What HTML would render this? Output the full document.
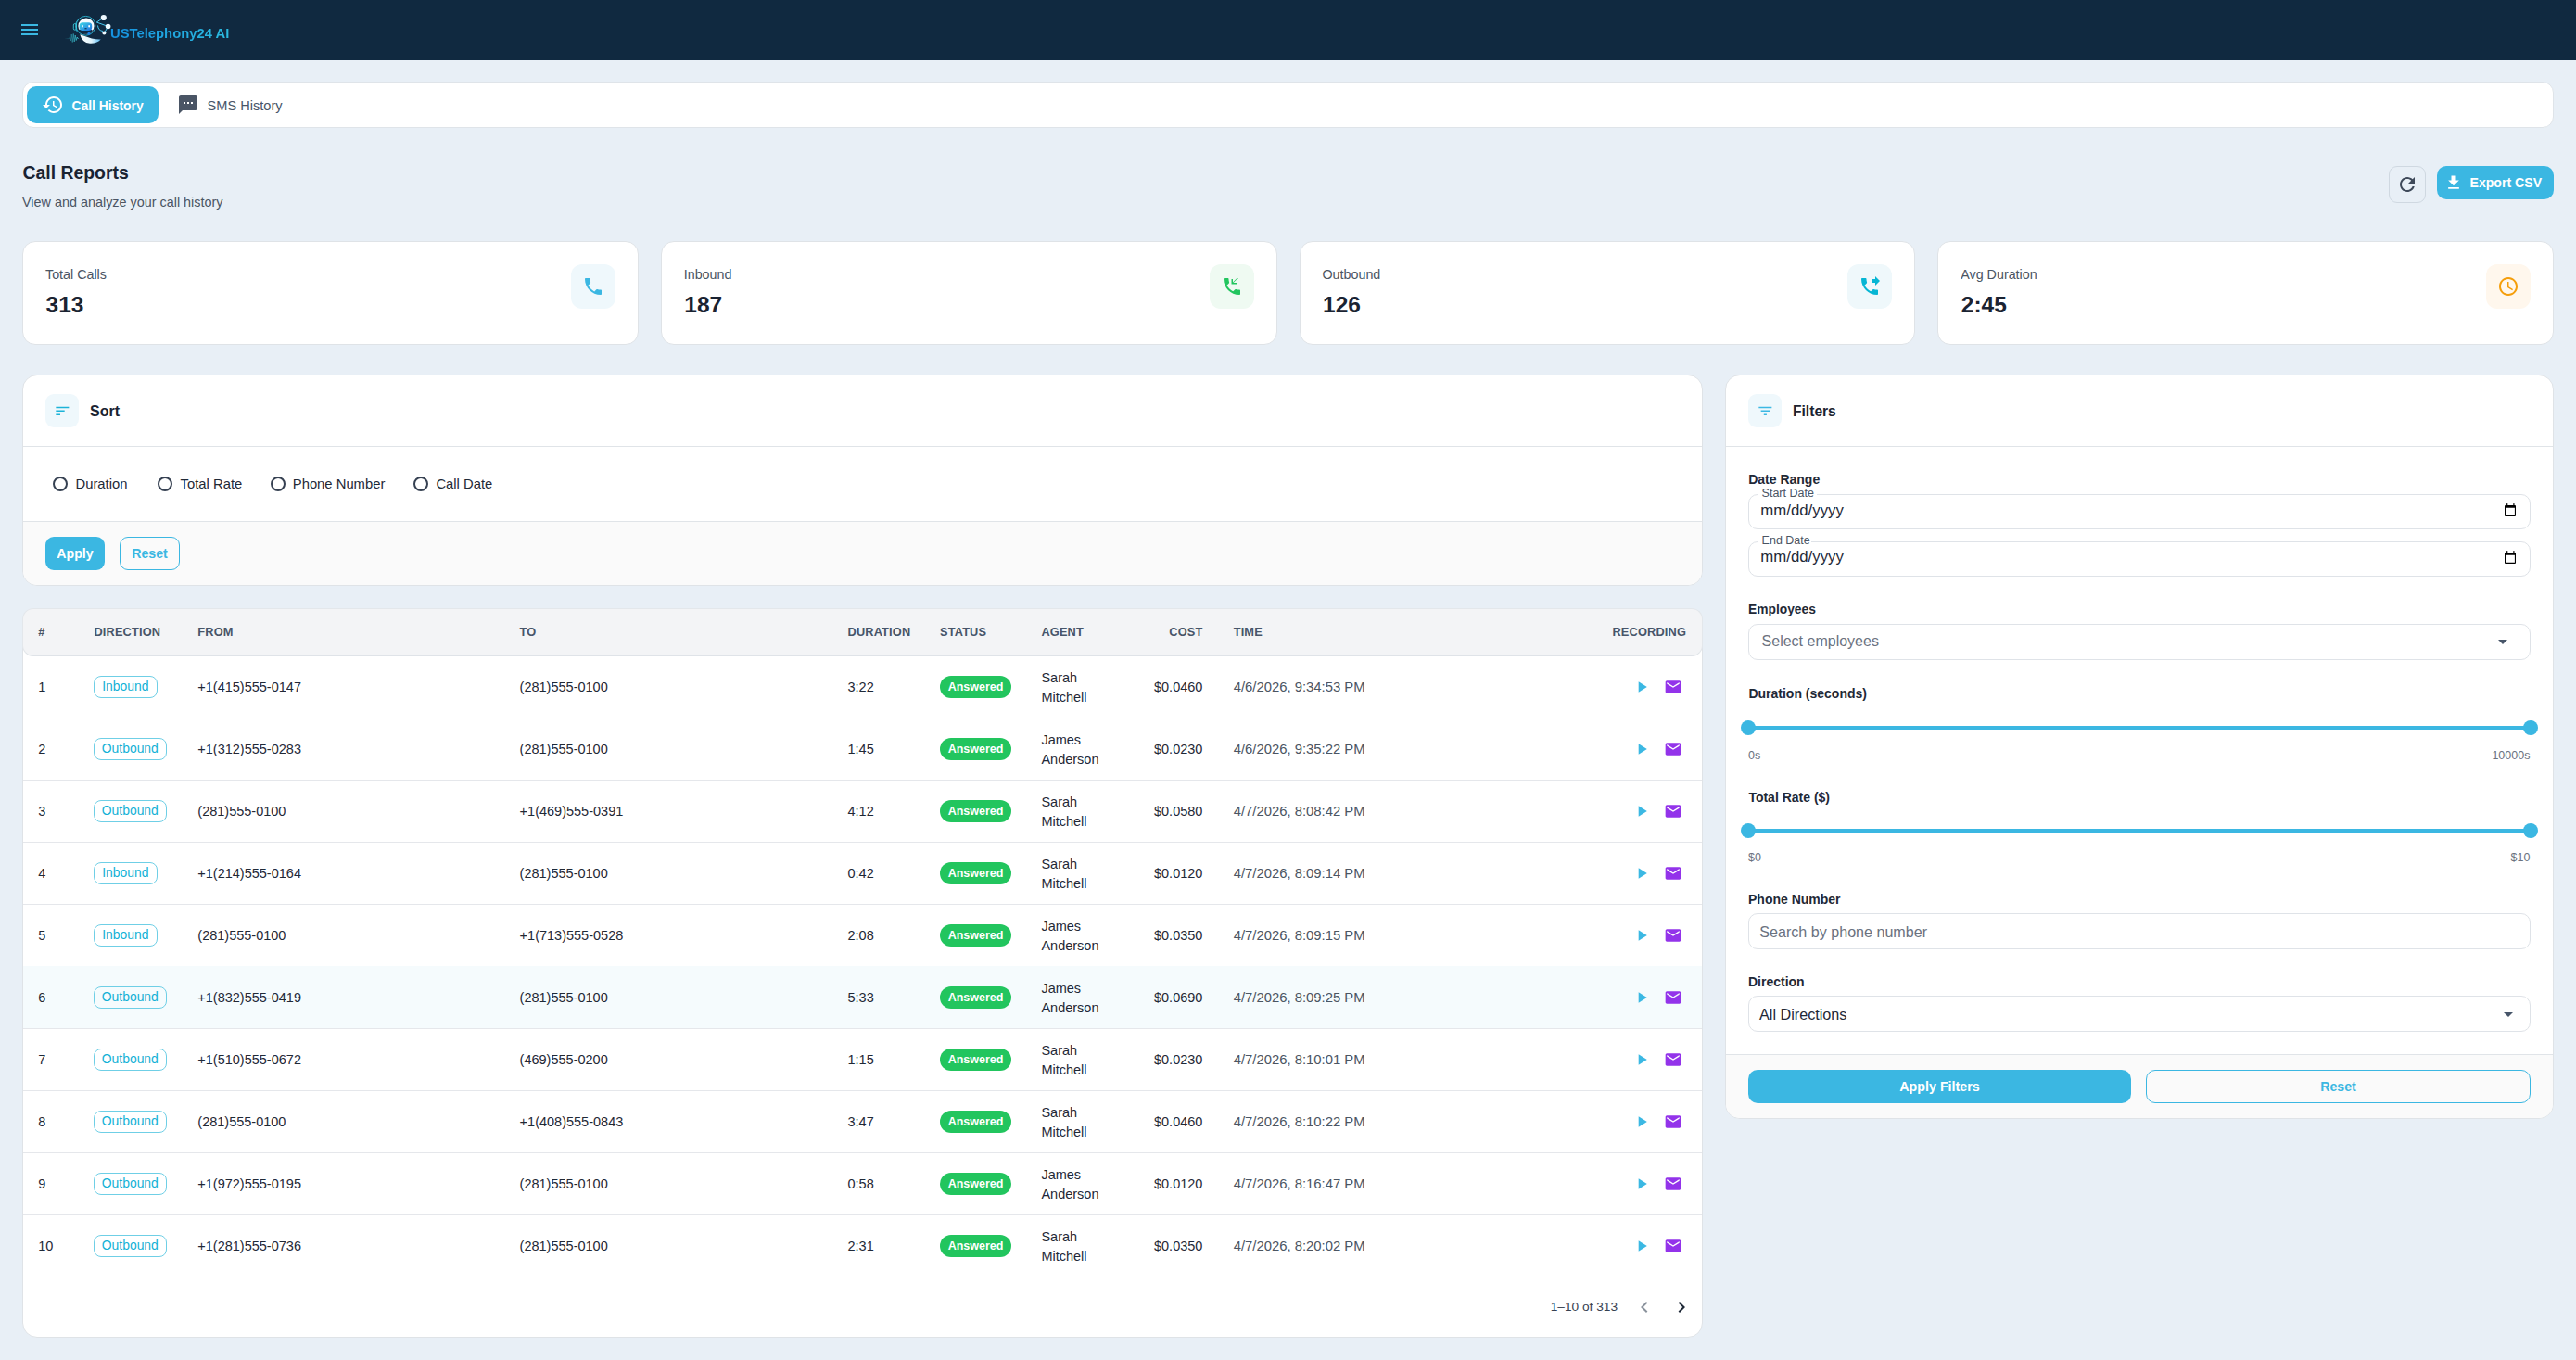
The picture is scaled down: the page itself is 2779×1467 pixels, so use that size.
<!DOCTYPE html>
<html><head><meta charset="utf-8"><title>Call Reports</title>
<style>
html,body{margin:0;padding:0}
body{width:2779px;height:1467px;position:relative;overflow:hidden;background:#e8eff6;font-family:"Liberation Sans",sans-serif}
.t{position:absolute;white-space:nowrap}
.b{position:absolute}
.i{position:absolute;display:block}
</style></head><body>
<div class="b" style="left:0px;top:0px;width:2779px;height:65px;background:#102940"></div>
<svg class="i" style="left:20px;top:20px;" width="24" height="24" viewBox="0 0 24 24"><path d="M3 18h18v-2H3v2zm0-5h18v-2H3v2zm0-7v2h18V6H3z" fill="#3bb8e3"/></svg>
<svg class="i" style="left:66px;top:12px" width="56" height="38" viewBox="0 0 56 38">
<defs>
<linearGradient id="vis" x1="0" y1="0" x2="1" y2="1"><stop offset="0" stop-color="#3fd9e6"/><stop offset="1" stop-color="#1e6fe0"/></linearGradient>
<linearGradient id="bod" x1="0" y1="0" x2="1" y2="0"><stop offset="0" stop-color="#ffffff"/><stop offset="0.55" stop-color="#dff3fb"/><stop offset="1" stop-color="#56b9f2"/></linearGradient>
<linearGradient id="wav" x1="0" y1="0" x2="1" y2="0"><stop offset="0" stop-color="#2aa5b8" stop-opacity="0"/><stop offset="1" stop-color="#3cc0d0"/></linearGradient>
</defs>
<path d="M3.5 29.6 H8.5 L9.4 27.5 L10.3 32 L11.2 25 L12.2 33.5 L13.2 24.5 L14.2 33 L15.2 26 L16.2 31.5 L17.2 28 L18.5 30" stroke="url(#wav)" stroke-width="0.9" fill="none"/>
<circle cx="26.5" cy="15.8" r="10.4" fill="none" stroke="#2cb9d6" stroke-width="0.9"/>
<path d="M18 9.5 A10.4 10.4 0 0 0 17.2 22" stroke="#2cb9d6" stroke-width="0.8" fill="none"/>
<rect x="13.3" y="13.6" width="3.2" height="6.6" rx="1.4" fill="none" stroke="#3cc7da" stroke-width="0.9"/>
<circle cx="27" cy="16" r="8.6" fill="#f4fbff"/>
<path d="M18.6 18 Q19 24.5 27 24.7 Q31 24.5 33.5 21.5 L33.5 20 L19 20z" fill="#102a44"/>
<rect x="19.6" y="12.3" width="13.6" height="8.8" rx="3.6" fill="url(#vis)"/>
<rect x="22.1" y="15" width="1.7" height="2.6" rx="0.8" fill="#fff"/>
<rect x="29.3" y="15" width="1.7" height="2.6" rx="0.8" fill="#fff"/>
<rect x="25.3" y="18.3" width="2.4" height="1" rx="0.5" fill="#0f2a44"/>
<circle cx="29.9" cy="24.3" r="1.5" fill="#1b7fe0"/>
<path d="M20.3 25.2 Q27 27.5 33 29.4 Q39 30.8 42.8 30.5 Q38 35.2 31 34.8 Q22.5 34 20.3 25.2z" fill="url(#bod)"/>
<path d="M38.3 12 L45.8 7 M38.3 12 L50.6 16.5 L46.4 23.5" stroke="#49c9f2" stroke-width="1" fill="none"/>
<path d="M39.5 15.5 Q40 21 45 21.5" stroke="#49c9f2" stroke-width="1" fill="none"/>
<circle cx="45.8" cy="7" r="3.1" fill="#eef9ff"/>
<circle cx="50.6" cy="16.5" r="2.8" fill="#eef9ff"/>
<circle cx="46.4" cy="23.5" r="2" fill="#eef9ff"/>
</svg>
<div class="t" style="left:119px;top:29.4px;font-size:14.8px;line-height:15px;font-weight:700;background:linear-gradient(90deg,#1591e0,#2bbbe0);-webkit-background-clip:text;background-clip:text;color:transparent">USTelephony24 AI</div>
<div class="b" style="left:24px;top:88px;width:2731px;height:50px;background:#fff;border:1px solid #dfe4e9;border-radius:12px;box-sizing:border-box"></div>
<div class="b" style="left:29px;top:93px;width:142px;height:40px;background:#3bb7e2;border-radius:10px"></div>
<svg class="i" style="left:45px;top:101px;" width="24" height="24" viewBox="0 0 24 24"><path d="M13 3c-4.97 0-9 4.03-9 9H1l3.89 3.89.07.14L9 12H6c0-3.87 3.13-7 7-7s7 3.13 7 7-3.13 7-7 7c-1.93 0-3.68-.79-4.94-2.06l-1.42 1.42C8.27 19.99 10.51 21 13 21c4.97 0 9-4.03 9-9s-4.03-9-9-9zm-1 5v5l4.28 2.54.72-1.21-3.5-2.08V8H12z" fill="#fff"/></svg>
<div class="t" style="left:77.50px;top:107.73px;font-size:13.9px;line-height:13.9px;font-weight:700;color:#fff;">Call History</div>
<svg class="i" style="left:191px;top:101px;" width="24" height="24" viewBox="0 0 24 24"><path d="M20 2H4c-1.1 0-1.99.9-1.99 2L2 22l4-4h14c1.1 0 2-.9 2-2V4c0-1.1-.9-2-2-2zM9 11H7V9h2v2zm4 0h-2V9h2v2zm4 0h-2V9h2v2z" fill="#4a5565"/></svg>
<div class="t" style="left:223.50px;top:106.84px;font-size:14.6px;line-height:14.6px;font-weight:400;color:#475569;">SMS History</div>
<div class="t" style="left:24.50px;top:176.58px;font-size:19.4px;line-height:19.4px;font-weight:700;color:#1a2332;">Call Reports</div>
<div class="t" style="left:24.00px;top:211.21px;font-size:14.4px;line-height:14.4px;font-weight:400;color:#4b5563;">View and analyze your call history</div>
<div class="b" style="left:2577px;top:179px;width:40px;height:40px;border:1px solid #cfd8e1;border-radius:9px;box-sizing:border-box"></div>
<svg class="i" style="left:2585px;top:187px;" width="24" height="24" viewBox="0 0 24 24"><path d="M17.65 6.35C16.2 4.9 14.21 4 12 4c-4.42 0-7.99 3.58-7.99 8s3.57 8 7.99 8c3.73 0 6.84-2.55 7.73-6h-2.08c-.82 2.33-3.04 4-5.65 4-3.31 0-6-2.69-6-6s2.69-6 6-6c1.66 0 3.14.69 4.22 1.78L13 11h7V4l-2.35 2.35z" fill="#3f4a5a"/></svg>
<div class="b" style="left:2629px;top:179px;width:126px;height:36px;background:#3bb7e2;border-radius:10px"></div>
<svg class="i" style="left:2637px;top:187px;" width="20" height="20" viewBox="0 0 24 24"><path d="M5 20h14v-2H5v2zM19 9h-4V3H9v6H5l7 7 7-7z" fill="#fff"/></svg>
<div class="t" style="left:2664.50px;top:190.06px;font-size:14.1px;line-height:14.1px;font-weight:700;color:#fff;">Export CSV</div>
<div class="b" style="left:24.0px;top:260px;width:664.75px;height:112px;background:#fff;border:1px solid #dfe3e7;border-radius:14px;box-sizing:border-box"></div>
<div class="t" style="left:49.00px;top:288.90px;font-size:14.3px;line-height:14.3px;font-weight:400;color:#4b5563;">Total Calls</div>
<div class="t" style="left:49.50px;top:316.76px;font-size:24.5px;line-height:24.5px;font-weight:700;color:#1a2332;">313</div>
<div class="b" style="left:615.75px;top:285px;width:48.0px;height:48px;background:#eff8fc;border-radius:12px"></div>
<svg class="i" style="left:627.75px;top:297px;" width="24" height="24" viewBox="0 0 24 24"><path d="M6.62 10.79c1.44 2.83 3.76 5.14 6.59 6.59l2.2-2.2c.27-.27.67-.36 1.02-.24 1.12.37 2.33.57 3.57.57.55 0 1 .45 1 1V20c0 .55-.45 1-1 1-9.39 0-17-7.61-17-17 0-.55.45-1 1-1h3.5c.55 0 1 .45 1 1 0 1.25.2 2.45.57 3.57.11.35.03.74-.25 1.02l-2.2 2.2z" fill="#3bb7e2"/></svg>
<div class="b" style="left:712.75px;top:260px;width:664.75px;height:112px;background:#fff;border:1px solid #dfe3e7;border-radius:14px;box-sizing:border-box"></div>
<div class="t" style="left:737.75px;top:288.90px;font-size:14.3px;line-height:14.3px;font-weight:400;color:#4b5563;">Inbound</div>
<div class="t" style="left:738.25px;top:316.76px;font-size:24.5px;line-height:24.5px;font-weight:700;color:#1a2332;">187</div>
<div class="b" style="left:1304.5px;top:285px;width:48.0px;height:48px;background:#effaf2;border-radius:12px"></div>
<svg class="i" style="left:1316.5px;top:297px;" width="24" height="24" viewBox="0 0 24 24"><path d="M20 15.5c-1.25 0-2.45-.2-3.57-.57-.35-.11-.74-.03-1.02.24l-2.2 2.2c-2.83-1.44-5.15-3.75-6.59-6.59l2.2-2.21c.28-.26.36-.65.25-1C8.7 6.45 8.5 5.25 8.5 4c0-.55-.45-1-1-1H4c-.55 0-1 .45-1 1 0 9.39 7.61 17 17 17 .55 0 1-.45 1-1v-3.5c0-.55-.45-1-1-1zM19 4h-1.5v-.01L13.5 8H17v1.5h-5.5V4H13v3.49L17 3.5h2z" fill="#22c55e"/></svg>
<div class="b" style="left:1401.5px;top:260px;width:664.75px;height:112px;background:#fff;border:1px solid #dfe3e7;border-radius:14px;box-sizing:border-box"></div>
<div class="t" style="left:1426.50px;top:288.90px;font-size:14.3px;line-height:14.3px;font-weight:400;color:#4b5563;">Outbound</div>
<div class="t" style="left:1427.00px;top:316.76px;font-size:24.5px;line-height:24.5px;font-weight:700;color:#1a2332;">126</div>
<div class="b" style="left:1993.25px;top:285px;width:48.0px;height:48px;background:#eff8fb;border-radius:12px"></div>
<svg class="i" style="left:2005.25px;top:297px;" width="24" height="24" viewBox="0 0 24 24"><path d="M18 11l5-5-5-5v3h-4v4h4v3zm2 4.5c-1.25 0-2.45-.2-3.57-.57-.35-.11-.74-.03-1.02.24l-2.2 2.2c-2.83-1.44-5.15-3.75-6.59-6.59l2.2-2.21c.28-.26.36-.65.25-1C8.7 6.45 8.5 5.25 8.5 4c0-.55-.45-1-1-1H4c-.55 0-1 .45-1 1 0 9.39 7.61 17 17 17 .55 0 1-.45 1-1v-3.5c0-.55-.45-1-1-1z" fill="#06b6d4"/></svg>
<div class="b" style="left:2090.25px;top:260px;width:664.75px;height:112px;background:#fff;border:1px solid #dfe3e7;border-radius:14px;box-sizing:border-box"></div>
<div class="t" style="left:2115.25px;top:288.90px;font-size:14.3px;line-height:14.3px;font-weight:400;color:#4b5563;">Avg Duration</div>
<div class="t" style="left:2115.75px;top:316.76px;font-size:24.5px;line-height:24.5px;font-weight:700;color:#1a2332;">2:45</div>
<div class="b" style="left:2682.0px;top:285px;width:48.0px;height:48px;background:#fff7ed;border-radius:12px"></div>
<svg class="i" style="left:2694.0px;top:297px;" width="24" height="24" viewBox="0 0 24 24"><path d="M11.99 2C6.47 2 2 6.48 2 12s4.47 10 9.99 10C17.52 22 22 17.52 22 12S17.52 2 11.99 2zM12 20c-4.42 0-8-3.58-8-8s3.58-8 8-8 8 3.58 8 8-3.58 8-8 8zm.5-13H11v6l5.25 3.15.75-1.23-4.5-2.67z" fill="#f59e0b"/></svg>
<div class="b" style="left:24px;top:404px;width:1813px;height:228px;background:#fff;border:1px solid #dfe3e7;border-radius:16px;box-sizing:border-box;overflow:hidden"></div>
<div class="b" style="left:25px;top:481px;width:1811px;height:1px;background:#e0e4e8"></div>
<div class="b" style="left:25px;top:562px;width:1811px;height:69px;background:#fafafa;border-top:1px solid #e0e4e8;border-radius:0 0 15px 15px;box-sizing:border-box"></div>
<div class="b" style="left:49px;top:425px;width:36px;height:36px;background:#eff8fc;border-radius:9px"></div>
<svg class="i" style="left:57.6px;top:433.6px;" width="18.7" height="18.7" viewBox="0 0 24 24"><path d="M3 18h6v-2H3v2zM3 6v2h18V6H3zm0 7h12v-2H3v2z" fill="#1cb3d8"/></svg>
<div class="t" style="left:97.00px;top:435.66px;font-size:16px;line-height:16px;font-weight:700;color:#1a2332;">Sort</div>
<div class="b" style="left:56.9px;top:513.7px;width:16.000000000000007px;height:16.0px;border:2px solid #364152;border-radius:50%;box-sizing:border-box"></div>
<div class="t" style="left:81.50px;top:515.27px;font-size:14.8px;line-height:14.8px;font-weight:400;color:#1f2937;">Duration</div>
<div class="b" style="left:170.20000000000002px;top:513.7px;width:16.0px;height:16.0px;border:2px solid #364152;border-radius:50%;box-sizing:border-box"></div>
<div class="t" style="left:194.60px;top:515.27px;font-size:14.8px;line-height:14.8px;font-weight:400;color:#1f2937;">Total Rate</div>
<div class="b" style="left:292.2px;top:513.7px;width:16.0px;height:16.0px;border:2px solid #364152;border-radius:50%;box-sizing:border-box"></div>
<div class="t" style="left:315.80px;top:515.27px;font-size:14.8px;line-height:14.8px;font-weight:400;color:#1f2937;">Phone Number</div>
<div class="b" style="left:446.4px;top:513.7px;width:16.0px;height:16.0px;border:2px solid #364152;border-radius:50%;box-sizing:border-box"></div>
<div class="t" style="left:470.40px;top:515.27px;font-size:14.8px;line-height:14.8px;font-weight:400;color:#1f2937;">Call Date</div>
<div class="b" style="left:49px;top:579px;width:64px;height:36px;background:#3bb7e2;border-radius:9px"></div>
<div class="t" style="left:-419.00px;width:1000px;text-align:center;top:589.98px;font-size:14.2px;line-height:14.2px;font-weight:700;color:#fff;">Apply</div>
<div class="b" style="left:129px;top:579px;width:65px;height:36px;border:1px solid #3bb7e2;border-radius:9px;box-sizing:border-box"></div>
<div class="t" style="left:-338.50px;width:1000px;text-align:center;top:589.98px;font-size:14.2px;line-height:14.2px;font-weight:700;color:#3bb7e2;">Reset</div>
<div class="b" style="left:24px;top:656px;width:1813px;height:787px;background:#fff;border:1px solid #dfe3e7;border-radius:16px;box-sizing:border-box"></div>
<div class="b" style="left:24px;top:656px;width:1813px;height:52px;background:#f3f4f6;border:1px solid #e3e7eb;border-bottom-color:#dfe3e8;border-radius:12px;box-sizing:border-box"></div>
<div class="t" style="left:41.30px;top:675.76px;font-size:12.8px;line-height:12.8px;font-weight:700;color:#475569;">#</div>
<div class="t" style="left:101.40px;top:675.76px;font-size:12.8px;line-height:12.8px;font-weight:700;color:#475569;letter-spacing:0.15px;">DIRECTION</div>
<div class="t" style="left:213.30px;top:675.76px;font-size:12.8px;line-height:12.8px;font-weight:700;color:#475569;letter-spacing:0.15px;">FROM</div>
<div class="t" style="left:560.60px;top:675.76px;font-size:12.8px;line-height:12.8px;font-weight:700;color:#475569;letter-spacing:0.15px;">TO</div>
<div class="t" style="left:914.50px;top:675.76px;font-size:12.8px;line-height:12.8px;font-weight:700;color:#475569;letter-spacing:0.15px;">DURATION</div>
<div class="t" style="left:1014.00px;top:675.76px;font-size:12.8px;line-height:12.8px;font-weight:700;color:#475569;letter-spacing:0.15px;">STATUS</div>
<div class="t" style="left:1123.40px;top:675.76px;font-size:12.8px;line-height:12.8px;font-weight:700;color:#475569;letter-spacing:0.15px;">AGENT</div>
<div class="t" style="right:1481.60px;top:675.76px;font-size:12.8px;line-height:12.8px;font-weight:700;color:#475569;letter-spacing:0.15px;">COST</div>
<div class="t" style="left:1330.70px;top:675.76px;font-size:12.8px;line-height:12.8px;font-weight:700;color:#475569;letter-spacing:0.15px;">TIME</div>
<div class="t" style="right:960.00px;top:675.76px;font-size:12.8px;line-height:12.8px;font-weight:700;color:#475569;letter-spacing:0.15px;">RECORDING</div>
<div class="b" style="left:25px;top:774px;width:1811px;height:1px;background:#e5e7eb"></div>
<div class="t" style="left:41.30px;top:734.43px;font-size:14.5px;line-height:14.5px;font-weight:400;color:#1f2937;">1</div>
<div class="b" style="left:101px;top:729.2px;width:69px;height:24.0px;border:1px solid #6fcfe6;border-radius:8px;box-sizing:border-box"></div>
<div class="t" style="left:-364.70px;width:1000px;text-align:center;top:734.03px;font-size:13.9px;line-height:13.9px;font-weight:400;color:#13b1d6;">Inbound</div>
<div class="t" style="left:213.30px;top:734.43px;font-size:14.5px;line-height:14.5px;font-weight:400;color:#1f2937;">+1(415)555-0147</div>
<div class="t" style="left:560.60px;top:734.43px;font-size:14.5px;line-height:14.5px;font-weight:400;color:#1f2937;">(281)555-0100</div>
<div class="t" style="left:914.50px;top:734.43px;font-size:14.5px;line-height:14.5px;font-weight:400;color:#1f2937;">3:22</div>
<div class="b" style="left:1014px;top:729.2px;width:77px;height:24.0px;background:#22c55e;border-radius:12px"></div>
<div class="t" style="left:552.50px;width:1000px;text-align:center;top:735.22px;font-size:12.5px;line-height:12.5px;font-weight:700;color:#fff;">Answered</div>
<div class="t" style="left:1123.40px;top:723.93px;font-size:14.5px;line-height:14.5px;font-weight:400;color:#1f2937;">Sarah</div>
<div class="t" style="left:1123.40px;top:744.93px;font-size:14.5px;line-height:14.5px;font-weight:400;color:#1f2937;">Mitchell</div>
<div class="t" style="right:1481.60px;top:734.43px;font-size:14.5px;line-height:14.5px;font-weight:400;color:#1f2937;">$0.0460</div>
<div class="t" style="left:1330.70px;top:733.63px;font-size:14.85px;line-height:14.85px;font-weight:400;color:#4b5563;">4/6/2026, 9:34:53 PM</div>
<svg class="i" style="left:1760.8px;top:731.2px;" width="20" height="20" viewBox="0 0 24 24"><path d="M8 5v14l11-7z" fill="#3bb8e3"/></svg>
<svg class="i" style="left:1795px;top:731.2px;" width="20" height="20" viewBox="0 0 24 24"><path d="M20 4H4c-1.1 0-1.99.9-1.99 2L2 18c0 1.1.9 2 2 2h16c1.1 0 2-.9 2-2V6c0-1.1-.9-2-2-2zm0 4l-8 5-8-5V6l8 5 8-5v2z" fill="#9333ea"/></svg>
<div class="b" style="left:25px;top:841px;width:1811px;height:1px;background:#e5e7eb"></div>
<div class="t" style="left:41.30px;top:801.43px;font-size:14.5px;line-height:14.5px;font-weight:400;color:#1f2937;">2</div>
<div class="b" style="left:101px;top:796.2px;width:79px;height:24.0px;border:1px solid #6fcfe6;border-radius:8px;box-sizing:border-box"></div>
<div class="t" style="left:-359.70px;width:1000px;text-align:center;top:801.03px;font-size:13.9px;line-height:13.9px;font-weight:400;color:#13b1d6;">Outbound</div>
<div class="t" style="left:213.30px;top:801.43px;font-size:14.5px;line-height:14.5px;font-weight:400;color:#1f2937;">+1(312)555-0283</div>
<div class="t" style="left:560.60px;top:801.43px;font-size:14.5px;line-height:14.5px;font-weight:400;color:#1f2937;">(281)555-0100</div>
<div class="t" style="left:914.50px;top:801.43px;font-size:14.5px;line-height:14.5px;font-weight:400;color:#1f2937;">1:45</div>
<div class="b" style="left:1014px;top:796.2px;width:77px;height:24.0px;background:#22c55e;border-radius:12px"></div>
<div class="t" style="left:552.50px;width:1000px;text-align:center;top:802.22px;font-size:12.5px;line-height:12.5px;font-weight:700;color:#fff;">Answered</div>
<div class="t" style="left:1123.40px;top:790.93px;font-size:14.5px;line-height:14.5px;font-weight:400;color:#1f2937;">James</div>
<div class="t" style="left:1123.40px;top:811.93px;font-size:14.5px;line-height:14.5px;font-weight:400;color:#1f2937;">Anderson</div>
<div class="t" style="right:1481.60px;top:801.43px;font-size:14.5px;line-height:14.5px;font-weight:400;color:#1f2937;">$0.0230</div>
<div class="t" style="left:1330.70px;top:800.63px;font-size:14.85px;line-height:14.85px;font-weight:400;color:#4b5563;">4/6/2026, 9:35:22 PM</div>
<svg class="i" style="left:1760.8px;top:798.2px;" width="20" height="20" viewBox="0 0 24 24"><path d="M8 5v14l11-7z" fill="#3bb8e3"/></svg>
<svg class="i" style="left:1795px;top:798.2px;" width="20" height="20" viewBox="0 0 24 24"><path d="M20 4H4c-1.1 0-1.99.9-1.99 2L2 18c0 1.1.9 2 2 2h16c1.1 0 2-.9 2-2V6c0-1.1-.9-2-2-2zm0 4l-8 5-8-5V6l8 5 8-5v2z" fill="#9333ea"/></svg>
<div class="b" style="left:25px;top:908px;width:1811px;height:1px;background:#e5e7eb"></div>
<div class="t" style="left:41.30px;top:868.43px;font-size:14.5px;line-height:14.5px;font-weight:400;color:#1f2937;">3</div>
<div class="b" style="left:101px;top:863.2px;width:79px;height:24.0px;border:1px solid #6fcfe6;border-radius:8px;box-sizing:border-box"></div>
<div class="t" style="left:-359.70px;width:1000px;text-align:center;top:868.03px;font-size:13.9px;line-height:13.9px;font-weight:400;color:#13b1d6;">Outbound</div>
<div class="t" style="left:213.30px;top:868.43px;font-size:14.5px;line-height:14.5px;font-weight:400;color:#1f2937;">(281)555-0100</div>
<div class="t" style="left:560.60px;top:868.43px;font-size:14.5px;line-height:14.5px;font-weight:400;color:#1f2937;">+1(469)555-0391</div>
<div class="t" style="left:914.50px;top:868.43px;font-size:14.5px;line-height:14.5px;font-weight:400;color:#1f2937;">4:12</div>
<div class="b" style="left:1014px;top:863.2px;width:77px;height:24.0px;background:#22c55e;border-radius:12px"></div>
<div class="t" style="left:552.50px;width:1000px;text-align:center;top:869.22px;font-size:12.5px;line-height:12.5px;font-weight:700;color:#fff;">Answered</div>
<div class="t" style="left:1123.40px;top:857.93px;font-size:14.5px;line-height:14.5px;font-weight:400;color:#1f2937;">Sarah</div>
<div class="t" style="left:1123.40px;top:878.93px;font-size:14.5px;line-height:14.5px;font-weight:400;color:#1f2937;">Mitchell</div>
<div class="t" style="right:1481.60px;top:868.43px;font-size:14.5px;line-height:14.5px;font-weight:400;color:#1f2937;">$0.0580</div>
<div class="t" style="left:1330.70px;top:867.63px;font-size:14.85px;line-height:14.85px;font-weight:400;color:#4b5563;">4/7/2026, 8:08:42 PM</div>
<svg class="i" style="left:1760.8px;top:865.2px;" width="20" height="20" viewBox="0 0 24 24"><path d="M8 5v14l11-7z" fill="#3bb8e3"/></svg>
<svg class="i" style="left:1795px;top:865.2px;" width="20" height="20" viewBox="0 0 24 24"><path d="M20 4H4c-1.1 0-1.99.9-1.99 2L2 18c0 1.1.9 2 2 2h16c1.1 0 2-.9 2-2V6c0-1.1-.9-2-2-2zm0 4l-8 5-8-5V6l8 5 8-5v2z" fill="#9333ea"/></svg>
<div class="b" style="left:25px;top:975px;width:1811px;height:1px;background:#e5e7eb"></div>
<div class="t" style="left:41.30px;top:935.43px;font-size:14.5px;line-height:14.5px;font-weight:400;color:#1f2937;">4</div>
<div class="b" style="left:101px;top:930.2px;width:69px;height:24.0px;border:1px solid #6fcfe6;border-radius:8px;box-sizing:border-box"></div>
<div class="t" style="left:-364.70px;width:1000px;text-align:center;top:935.03px;font-size:13.9px;line-height:13.9px;font-weight:400;color:#13b1d6;">Inbound</div>
<div class="t" style="left:213.30px;top:935.43px;font-size:14.5px;line-height:14.5px;font-weight:400;color:#1f2937;">+1(214)555-0164</div>
<div class="t" style="left:560.60px;top:935.43px;font-size:14.5px;line-height:14.5px;font-weight:400;color:#1f2937;">(281)555-0100</div>
<div class="t" style="left:914.50px;top:935.43px;font-size:14.5px;line-height:14.5px;font-weight:400;color:#1f2937;">0:42</div>
<div class="b" style="left:1014px;top:930.2px;width:77px;height:24.0px;background:#22c55e;border-radius:12px"></div>
<div class="t" style="left:552.50px;width:1000px;text-align:center;top:936.22px;font-size:12.5px;line-height:12.5px;font-weight:700;color:#fff;">Answered</div>
<div class="t" style="left:1123.40px;top:924.93px;font-size:14.5px;line-height:14.5px;font-weight:400;color:#1f2937;">Sarah</div>
<div class="t" style="left:1123.40px;top:945.93px;font-size:14.5px;line-height:14.5px;font-weight:400;color:#1f2937;">Mitchell</div>
<div class="t" style="right:1481.60px;top:935.43px;font-size:14.5px;line-height:14.5px;font-weight:400;color:#1f2937;">$0.0120</div>
<div class="t" style="left:1330.70px;top:934.63px;font-size:14.85px;line-height:14.85px;font-weight:400;color:#4b5563;">4/7/2026, 8:09:14 PM</div>
<svg class="i" style="left:1760.8px;top:932.2px;" width="20" height="20" viewBox="0 0 24 24"><path d="M8 5v14l11-7z" fill="#3bb8e3"/></svg>
<svg class="i" style="left:1795px;top:932.2px;" width="20" height="20" viewBox="0 0 24 24"><path d="M20 4H4c-1.1 0-1.99.9-1.99 2L2 18c0 1.1.9 2 2 2h16c1.1 0 2-.9 2-2V6c0-1.1-.9-2-2-2zm0 4l-8 5-8-5V6l8 5 8-5v2z" fill="#9333ea"/></svg>
<div class="b" style="left:25px;top:1042px;width:1811px;height:1px;background:#e5e7eb"></div>
<div class="t" style="left:41.30px;top:1002.43px;font-size:14.5px;line-height:14.5px;font-weight:400;color:#1f2937;">5</div>
<div class="b" style="left:101px;top:997.2px;width:69px;height:24.0px;border:1px solid #6fcfe6;border-radius:8px;box-sizing:border-box"></div>
<div class="t" style="left:-364.70px;width:1000px;text-align:center;top:1002.03px;font-size:13.9px;line-height:13.9px;font-weight:400;color:#13b1d6;">Inbound</div>
<div class="t" style="left:213.30px;top:1002.43px;font-size:14.5px;line-height:14.5px;font-weight:400;color:#1f2937;">(281)555-0100</div>
<div class="t" style="left:560.60px;top:1002.43px;font-size:14.5px;line-height:14.5px;font-weight:400;color:#1f2937;">+1(713)555-0528</div>
<div class="t" style="left:914.50px;top:1002.43px;font-size:14.5px;line-height:14.5px;font-weight:400;color:#1f2937;">2:08</div>
<div class="b" style="left:1014px;top:997.2px;width:77px;height:24.0px;background:#22c55e;border-radius:12px"></div>
<div class="t" style="left:552.50px;width:1000px;text-align:center;top:1003.22px;font-size:12.5px;line-height:12.5px;font-weight:700;color:#fff;">Answered</div>
<div class="t" style="left:1123.40px;top:991.93px;font-size:14.5px;line-height:14.5px;font-weight:400;color:#1f2937;">James</div>
<div class="t" style="left:1123.40px;top:1012.93px;font-size:14.5px;line-height:14.5px;font-weight:400;color:#1f2937;">Anderson</div>
<div class="t" style="right:1481.60px;top:1002.43px;font-size:14.5px;line-height:14.5px;font-weight:400;color:#1f2937;">$0.0350</div>
<div class="t" style="left:1330.70px;top:1001.63px;font-size:14.85px;line-height:14.85px;font-weight:400;color:#4b5563;">4/7/2026, 8:09:15 PM</div>
<svg class="i" style="left:1760.8px;top:999.2px;" width="20" height="20" viewBox="0 0 24 24"><path d="M8 5v14l11-7z" fill="#3bb8e3"/></svg>
<svg class="i" style="left:1795px;top:999.2px;" width="20" height="20" viewBox="0 0 24 24"><path d="M20 4H4c-1.1 0-1.99.9-1.99 2L2 18c0 1.1.9 2 2 2h16c1.1 0 2-.9 2-2V6c0-1.1-.9-2-2-2zm0 4l-8 5-8-5V6l8 5 8-5v2z" fill="#9333ea"/></svg>
<div class="b" style="left:25px;top:1042px;width:1811px;height:67px;background:#f5fbfd"></div>
<div class="b" style="left:25px;top:1109px;width:1811px;height:1px;background:#e5e7eb"></div>
<div class="t" style="left:41.30px;top:1069.43px;font-size:14.5px;line-height:14.5px;font-weight:400;color:#1f2937;">6</div>
<div class="b" style="left:101px;top:1064.2px;width:79px;height:24.0px;border:1px solid #6fcfe6;border-radius:8px;box-sizing:border-box"></div>
<div class="t" style="left:-359.70px;width:1000px;text-align:center;top:1069.03px;font-size:13.9px;line-height:13.9px;font-weight:400;color:#13b1d6;">Outbound</div>
<div class="t" style="left:213.30px;top:1069.43px;font-size:14.5px;line-height:14.5px;font-weight:400;color:#1f2937;">+1(832)555-0419</div>
<div class="t" style="left:560.60px;top:1069.43px;font-size:14.5px;line-height:14.5px;font-weight:400;color:#1f2937;">(281)555-0100</div>
<div class="t" style="left:914.50px;top:1069.43px;font-size:14.5px;line-height:14.5px;font-weight:400;color:#1f2937;">5:33</div>
<div class="b" style="left:1014px;top:1064.2px;width:77px;height:24.0px;background:#22c55e;border-radius:12px"></div>
<div class="t" style="left:552.50px;width:1000px;text-align:center;top:1070.22px;font-size:12.5px;line-height:12.5px;font-weight:700;color:#fff;">Answered</div>
<div class="t" style="left:1123.40px;top:1058.93px;font-size:14.5px;line-height:14.5px;font-weight:400;color:#1f2937;">James</div>
<div class="t" style="left:1123.40px;top:1079.93px;font-size:14.5px;line-height:14.5px;font-weight:400;color:#1f2937;">Anderson</div>
<div class="t" style="right:1481.60px;top:1069.43px;font-size:14.5px;line-height:14.5px;font-weight:400;color:#1f2937;">$0.0690</div>
<div class="t" style="left:1330.70px;top:1068.63px;font-size:14.85px;line-height:14.85px;font-weight:400;color:#4b5563;">4/7/2026, 8:09:25 PM</div>
<svg class="i" style="left:1760.8px;top:1066.2px;" width="20" height="20" viewBox="0 0 24 24"><path d="M8 5v14l11-7z" fill="#3bb8e3"/></svg>
<svg class="i" style="left:1795px;top:1066.2px;" width="20" height="20" viewBox="0 0 24 24"><path d="M20 4H4c-1.1 0-1.99.9-1.99 2L2 18c0 1.1.9 2 2 2h16c1.1 0 2-.9 2-2V6c0-1.1-.9-2-2-2zm0 4l-8 5-8-5V6l8 5 8-5v2z" fill="#9333ea"/></svg>
<div class="b" style="left:25px;top:1176px;width:1811px;height:1px;background:#e5e7eb"></div>
<div class="t" style="left:41.30px;top:1136.43px;font-size:14.5px;line-height:14.5px;font-weight:400;color:#1f2937;">7</div>
<div class="b" style="left:101px;top:1131.2px;width:79px;height:24.0px;border:1px solid #6fcfe6;border-radius:8px;box-sizing:border-box"></div>
<div class="t" style="left:-359.70px;width:1000px;text-align:center;top:1136.03px;font-size:13.9px;line-height:13.9px;font-weight:400;color:#13b1d6;">Outbound</div>
<div class="t" style="left:213.30px;top:1136.43px;font-size:14.5px;line-height:14.5px;font-weight:400;color:#1f2937;">+1(510)555-0672</div>
<div class="t" style="left:560.60px;top:1136.43px;font-size:14.5px;line-height:14.5px;font-weight:400;color:#1f2937;">(469)555-0200</div>
<div class="t" style="left:914.50px;top:1136.43px;font-size:14.5px;line-height:14.5px;font-weight:400;color:#1f2937;">1:15</div>
<div class="b" style="left:1014px;top:1131.2px;width:77px;height:24.0px;background:#22c55e;border-radius:12px"></div>
<div class="t" style="left:552.50px;width:1000px;text-align:center;top:1137.22px;font-size:12.5px;line-height:12.5px;font-weight:700;color:#fff;">Answered</div>
<div class="t" style="left:1123.40px;top:1125.93px;font-size:14.5px;line-height:14.5px;font-weight:400;color:#1f2937;">Sarah</div>
<div class="t" style="left:1123.40px;top:1146.93px;font-size:14.5px;line-height:14.5px;font-weight:400;color:#1f2937;">Mitchell</div>
<div class="t" style="right:1481.60px;top:1136.43px;font-size:14.5px;line-height:14.5px;font-weight:400;color:#1f2937;">$0.0230</div>
<div class="t" style="left:1330.70px;top:1135.63px;font-size:14.85px;line-height:14.85px;font-weight:400;color:#4b5563;">4/7/2026, 8:10:01 PM</div>
<svg class="i" style="left:1760.8px;top:1133.2px;" width="20" height="20" viewBox="0 0 24 24"><path d="M8 5v14l11-7z" fill="#3bb8e3"/></svg>
<svg class="i" style="left:1795px;top:1133.2px;" width="20" height="20" viewBox="0 0 24 24"><path d="M20 4H4c-1.1 0-1.99.9-1.99 2L2 18c0 1.1.9 2 2 2h16c1.1 0 2-.9 2-2V6c0-1.1-.9-2-2-2zm0 4l-8 5-8-5V6l8 5 8-5v2z" fill="#9333ea"/></svg>
<div class="b" style="left:25px;top:1243px;width:1811px;height:1px;background:#e5e7eb"></div>
<div class="t" style="left:41.30px;top:1203.43px;font-size:14.5px;line-height:14.5px;font-weight:400;color:#1f2937;">8</div>
<div class="b" style="left:101px;top:1198.2px;width:79px;height:24.0px;border:1px solid #6fcfe6;border-radius:8px;box-sizing:border-box"></div>
<div class="t" style="left:-359.70px;width:1000px;text-align:center;top:1203.03px;font-size:13.9px;line-height:13.9px;font-weight:400;color:#13b1d6;">Outbound</div>
<div class="t" style="left:213.30px;top:1203.43px;font-size:14.5px;line-height:14.5px;font-weight:400;color:#1f2937;">(281)555-0100</div>
<div class="t" style="left:560.60px;top:1203.43px;font-size:14.5px;line-height:14.5px;font-weight:400;color:#1f2937;">+1(408)555-0843</div>
<div class="t" style="left:914.50px;top:1203.43px;font-size:14.5px;line-height:14.5px;font-weight:400;color:#1f2937;">3:47</div>
<div class="b" style="left:1014px;top:1198.2px;width:77px;height:24.0px;background:#22c55e;border-radius:12px"></div>
<div class="t" style="left:552.50px;width:1000px;text-align:center;top:1204.22px;font-size:12.5px;line-height:12.5px;font-weight:700;color:#fff;">Answered</div>
<div class="t" style="left:1123.40px;top:1192.93px;font-size:14.5px;line-height:14.5px;font-weight:400;color:#1f2937;">Sarah</div>
<div class="t" style="left:1123.40px;top:1213.93px;font-size:14.5px;line-height:14.5px;font-weight:400;color:#1f2937;">Mitchell</div>
<div class="t" style="right:1481.60px;top:1203.43px;font-size:14.5px;line-height:14.5px;font-weight:400;color:#1f2937;">$0.0460</div>
<div class="t" style="left:1330.70px;top:1202.63px;font-size:14.85px;line-height:14.85px;font-weight:400;color:#4b5563;">4/7/2026, 8:10:22 PM</div>
<svg class="i" style="left:1760.8px;top:1200.2px;" width="20" height="20" viewBox="0 0 24 24"><path d="M8 5v14l11-7z" fill="#3bb8e3"/></svg>
<svg class="i" style="left:1795px;top:1200.2px;" width="20" height="20" viewBox="0 0 24 24"><path d="M20 4H4c-1.1 0-1.99.9-1.99 2L2 18c0 1.1.9 2 2 2h16c1.1 0 2-.9 2-2V6c0-1.1-.9-2-2-2zm0 4l-8 5-8-5V6l8 5 8-5v2z" fill="#9333ea"/></svg>
<div class="b" style="left:25px;top:1310px;width:1811px;height:1px;background:#e5e7eb"></div>
<div class="t" style="left:41.30px;top:1270.43px;font-size:14.5px;line-height:14.5px;font-weight:400;color:#1f2937;">9</div>
<div class="b" style="left:101px;top:1265.2px;width:79px;height:24.0px;border:1px solid #6fcfe6;border-radius:8px;box-sizing:border-box"></div>
<div class="t" style="left:-359.70px;width:1000px;text-align:center;top:1270.03px;font-size:13.9px;line-height:13.9px;font-weight:400;color:#13b1d6;">Outbound</div>
<div class="t" style="left:213.30px;top:1270.43px;font-size:14.5px;line-height:14.5px;font-weight:400;color:#1f2937;">+1(972)555-0195</div>
<div class="t" style="left:560.60px;top:1270.43px;font-size:14.5px;line-height:14.5px;font-weight:400;color:#1f2937;">(281)555-0100</div>
<div class="t" style="left:914.50px;top:1270.43px;font-size:14.5px;line-height:14.5px;font-weight:400;color:#1f2937;">0:58</div>
<div class="b" style="left:1014px;top:1265.2px;width:77px;height:24.0px;background:#22c55e;border-radius:12px"></div>
<div class="t" style="left:552.50px;width:1000px;text-align:center;top:1271.22px;font-size:12.5px;line-height:12.5px;font-weight:700;color:#fff;">Answered</div>
<div class="t" style="left:1123.40px;top:1259.93px;font-size:14.5px;line-height:14.5px;font-weight:400;color:#1f2937;">James</div>
<div class="t" style="left:1123.40px;top:1280.93px;font-size:14.5px;line-height:14.5px;font-weight:400;color:#1f2937;">Anderson</div>
<div class="t" style="right:1481.60px;top:1270.43px;font-size:14.5px;line-height:14.5px;font-weight:400;color:#1f2937;">$0.0120</div>
<div class="t" style="left:1330.70px;top:1269.63px;font-size:14.85px;line-height:14.85px;font-weight:400;color:#4b5563;">4/7/2026, 8:16:47 PM</div>
<svg class="i" style="left:1760.8px;top:1267.2px;" width="20" height="20" viewBox="0 0 24 24"><path d="M8 5v14l11-7z" fill="#3bb8e3"/></svg>
<svg class="i" style="left:1795px;top:1267.2px;" width="20" height="20" viewBox="0 0 24 24"><path d="M20 4H4c-1.1 0-1.99.9-1.99 2L2 18c0 1.1.9 2 2 2h16c1.1 0 2-.9 2-2V6c0-1.1-.9-2-2-2zm0 4l-8 5-8-5V6l8 5 8-5v2z" fill="#9333ea"/></svg>
<div class="b" style="left:25px;top:1377px;width:1811px;height:1px;background:#e5e7eb"></div>
<div class="t" style="left:41.30px;top:1337.43px;font-size:14.5px;line-height:14.5px;font-weight:400;color:#1f2937;">10</div>
<div class="b" style="left:101px;top:1332.2px;width:79px;height:24.0px;border:1px solid #6fcfe6;border-radius:8px;box-sizing:border-box"></div>
<div class="t" style="left:-359.70px;width:1000px;text-align:center;top:1337.03px;font-size:13.9px;line-height:13.9px;font-weight:400;color:#13b1d6;">Outbound</div>
<div class="t" style="left:213.30px;top:1337.43px;font-size:14.5px;line-height:14.5px;font-weight:400;color:#1f2937;">+1(281)555-0736</div>
<div class="t" style="left:560.60px;top:1337.43px;font-size:14.5px;line-height:14.5px;font-weight:400;color:#1f2937;">(281)555-0100</div>
<div class="t" style="left:914.50px;top:1337.43px;font-size:14.5px;line-height:14.5px;font-weight:400;color:#1f2937;">2:31</div>
<div class="b" style="left:1014px;top:1332.2px;width:77px;height:24.0px;background:#22c55e;border-radius:12px"></div>
<div class="t" style="left:552.50px;width:1000px;text-align:center;top:1338.22px;font-size:12.5px;line-height:12.5px;font-weight:700;color:#fff;">Answered</div>
<div class="t" style="left:1123.40px;top:1326.93px;font-size:14.5px;line-height:14.5px;font-weight:400;color:#1f2937;">Sarah</div>
<div class="t" style="left:1123.40px;top:1347.93px;font-size:14.5px;line-height:14.5px;font-weight:400;color:#1f2937;">Mitchell</div>
<div class="t" style="right:1481.60px;top:1337.43px;font-size:14.5px;line-height:14.5px;font-weight:400;color:#1f2937;">$0.0350</div>
<div class="t" style="left:1330.70px;top:1336.63px;font-size:14.85px;line-height:14.85px;font-weight:400;color:#4b5563;">4/7/2026, 8:20:02 PM</div>
<svg class="i" style="left:1760.8px;top:1334.2px;" width="20" height="20" viewBox="0 0 24 24"><path d="M8 5v14l11-7z" fill="#3bb8e3"/></svg>
<svg class="i" style="left:1795px;top:1334.2px;" width="20" height="20" viewBox="0 0 24 24"><path d="M20 4H4c-1.1 0-1.99.9-1.99 2L2 18c0 1.1.9 2 2 2h16c1.1 0 2-.9 2-2V6c0-1.1-.9-2-2-2zm0 4l-8 5-8-5V6l8 5 8-5v2z" fill="#9333ea"/></svg>
<div class="t" style="left:1672.70px;top:1403.40px;font-size:13.7px;line-height:13.7px;font-weight:400;color:#374151;">1–10 of 313</div>
<svg class="i" style="left:1761.5px;top:1398px;" width="24" height="24" viewBox="0 0 24 24"><path d="M15.41 7.41L14 6l-6 6 6 6 1.41-1.41L10.83 12z" fill="#8a929c"/></svg>
<svg class="i" style="left:1802px;top:1398px;" width="24" height="24" viewBox="0 0 24 24"><path d="M10 6L8.59 7.41 13.17 12l-4.58 4.59L10 18l6-6z" fill="#1f2937"/></svg>
<div class="b" style="left:1861px;top:404px;width:894px;height:803px;background:#fff;border:1px solid #dfe3e7;border-radius:16px;box-sizing:border-box"></div>
<div class="b" style="left:1862px;top:481px;width:892px;height:1px;background:#e0e4e8"></div>
<div class="b" style="left:1862px;top:1137px;width:892px;height:69px;background:#fafafa;border-top:1px solid #e0e4e8;border-radius:0 0 15px 15px;box-sizing:border-box"></div>
<div class="b" style="left:1886px;top:425px;width:36px;height:36px;background:#eff8fc;border-radius:9px"></div>
<svg class="i" style="left:1894.6px;top:433.6px;" width="18.7" height="18.7" viewBox="0 0 24 24"><path d="M10 18h4v-2h-4v2zM3 6v2h18V6H3zm3 7h12v-2H6v2z" fill="#3bb8e3"/></svg>
<div class="t" style="left:1934.00px;top:435.79px;font-size:15.6px;line-height:15.6px;font-weight:700;color:#1a2332;">Filters</div>
<div class="t" style="left:1886.20px;top:510.35px;font-size:14px;line-height:14px;font-weight:700;color:#1f2937;">Date Range</div>
<div class="b" style="left:1886px;top:533px;width:844px;height:37.5px;border:1px solid #dfe3e8;border-radius:10px;box-sizing:border-box"></div>
<div class="b" style="left:1896px;top:531px;width:64px;height:4px;background:#fff"></div>
<div class="t" style="left:1900.60px;top:525.92px;font-size:12.5px;line-height:12.5px;font-weight:400;color:#4b5563;font-weight:500">Start Date</div>
<div class="t" style="left:1899.30px;top:543.18px;font-size:16.8px;line-height:16.8px;font-weight:400;color:#1f2937;">mm/dd/yyyy</div>
<svg class="i" style="left:2700px;top:541px" width="16" height="16" viewBox="0 0 16 16"><path fill-rule="evenodd" fill="#000" d="M3 4.1h10a1 1 0 0 1 1 1v9.8a1 1 0 0 1-1 1H3a1 1 0 0 1-1-1V5.1a1 1 0 0 1 1-1zM3.1 6.8v8h9.8v-8z"/><rect x="4.1" y="2.1" width="1.2" height="2.4" fill="#000"/><rect x="11.3" y="2.1" width="1.2" height="2.4" fill="#000"/></svg>
<div class="b" style="left:1886px;top:584px;width:844px;height:37.5px;border:1px solid #dfe3e8;border-radius:10px;box-sizing:border-box"></div>
<div class="b" style="left:1896px;top:582px;width:58px;height:4px;background:#fff"></div>
<div class="t" style="left:1900.60px;top:576.92px;font-size:12.5px;line-height:12.5px;font-weight:400;color:#4b5563;font-weight:500">End Date</div>
<div class="t" style="left:1899.30px;top:592.98px;font-size:16.8px;line-height:16.8px;font-weight:400;color:#1f2937;">mm/dd/yyyy</div>
<svg class="i" style="left:2700px;top:592px" width="16" height="16" viewBox="0 0 16 16"><path fill-rule="evenodd" fill="#000" d="M3 4.1h10a1 1 0 0 1 1 1v9.8a1 1 0 0 1-1 1H3a1 1 0 0 1-1-1V5.1a1 1 0 0 1 1-1zM3.1 6.8v8h9.8v-8z"/><rect x="4.1" y="2.1" width="1.2" height="2.4" fill="#000"/><rect x="11.3" y="2.1" width="1.2" height="2.4" fill="#000"/></svg>
<div class="t" style="left:1886.00px;top:650.62px;font-size:13.8px;line-height:13.8px;font-weight:700;color:#1f2937;">Employees</div>
<div class="b" style="left:1886px;top:673px;width:844px;height:39px;border:1px solid #dfe3e8;border-radius:10px;box-sizing:border-box"></div>
<div class="t" style="left:1900.60px;top:684.16px;font-size:16px;line-height:16px;font-weight:400;color:#6b7280;">Select employees</div>
<div class="b" style="left:2695px;top:689.5px;width:0;height:0;border-left:5px solid transparent;border-right:5px solid transparent;border-top:5px solid #475569"></div>
<div class="t" style="left:1886.40px;top:741.45px;font-size:14px;line-height:14px;font-weight:700;color:#1f2937;">Duration (seconds)</div>
<div class="b" style="left:1886px;top:783px;width:844px;height:4px;background:#3bb7e2;border-radius:2px"></div>
<div class="b" style="left:1877.75px;top:776.75px;width:16.5px;height:16.5px;background:#3bb7e2;border-radius:50%"></div>
<div class="b" style="left:2721.75px;top:776.75px;width:16.5px;height:16.5px;background:#3bb7e2;border-radius:50%"></div>
<div class="t" style="left:1886.00px;top:808.72px;font-size:12.5px;line-height:12.5px;font-weight:400;color:#6b7280;">0s</div>
<div class="t" style="right:49.60px;top:808.72px;font-size:12.5px;line-height:12.5px;font-weight:400;color:#6b7280;">10000s</div>
<div class="t" style="left:1886.40px;top:853.25px;font-size:14px;line-height:14px;font-weight:700;color:#1f2937;">Total Rate ($)</div>
<div class="b" style="left:1886px;top:894px;width:844px;height:4px;background:#3bb7e2;border-radius:2px"></div>
<div class="b" style="left:1877.75px;top:887.75px;width:16.5px;height:16.5px;background:#3bb7e2;border-radius:50%"></div>
<div class="b" style="left:2721.75px;top:887.75px;width:16.5px;height:16.5px;background:#3bb7e2;border-radius:50%"></div>
<div class="t" style="left:1886.00px;top:919.42px;font-size:12.5px;line-height:12.5px;font-weight:400;color:#6b7280;">$0</div>
<div class="t" style="right:49.60px;top:919.42px;font-size:12.5px;line-height:12.5px;font-weight:400;color:#6b7280;">$10</div>
<div class="t" style="left:1886.00px;top:963.45px;font-size:14px;line-height:14px;font-weight:700;color:#1f2937;">Phone Number</div>
<div class="b" style="left:1886px;top:985px;width:844px;height:39px;border:1px solid #dfe3e8;border-radius:10px;box-sizing:border-box"></div>
<div class="t" style="left:1898.30px;top:997.07px;font-size:16.1px;line-height:16.1px;font-weight:400;color:#6b7280;">Search by phone number</div>
<div class="t" style="left:1886.00px;top:1052.35px;font-size:14px;line-height:14px;font-weight:700;color:#1f2937;">Direction</div>
<div class="b" style="left:1886px;top:1074px;width:844px;height:39px;border:1px solid #dfe3e8;border-radius:10px;box-sizing:border-box"></div>
<div class="t" style="left:1898.00px;top:1085.89px;font-size:16.2px;line-height:16.2px;font-weight:400;color:#1f2937;">All Directions</div>
<div class="b" style="left:2701px;top:1092px;width:0;height:0;border-left:5px solid transparent;border-right:5px solid transparent;border-top:5px solid #475569"></div>
<div class="b" style="left:1886px;top:1154px;width:413px;height:36px;background:#3bb7e2;border-radius:10px"></div>
<div class="t" style="left:1592.50px;width:1000px;text-align:center;top:1165.30px;font-size:14.3px;line-height:14.3px;font-weight:700;color:#fff;">Apply Filters</div>
<div class="b" style="left:2315px;top:1154px;width:415px;height:36px;border:1px solid #3bb7e2;border-radius:10px;box-sizing:border-box"></div>
<div class="t" style="left:2022.50px;width:1000px;text-align:center;top:1165.38px;font-size:14.2px;line-height:14.2px;font-weight:700;color:#3bb7e2;">Reset</div>
</body></html>
